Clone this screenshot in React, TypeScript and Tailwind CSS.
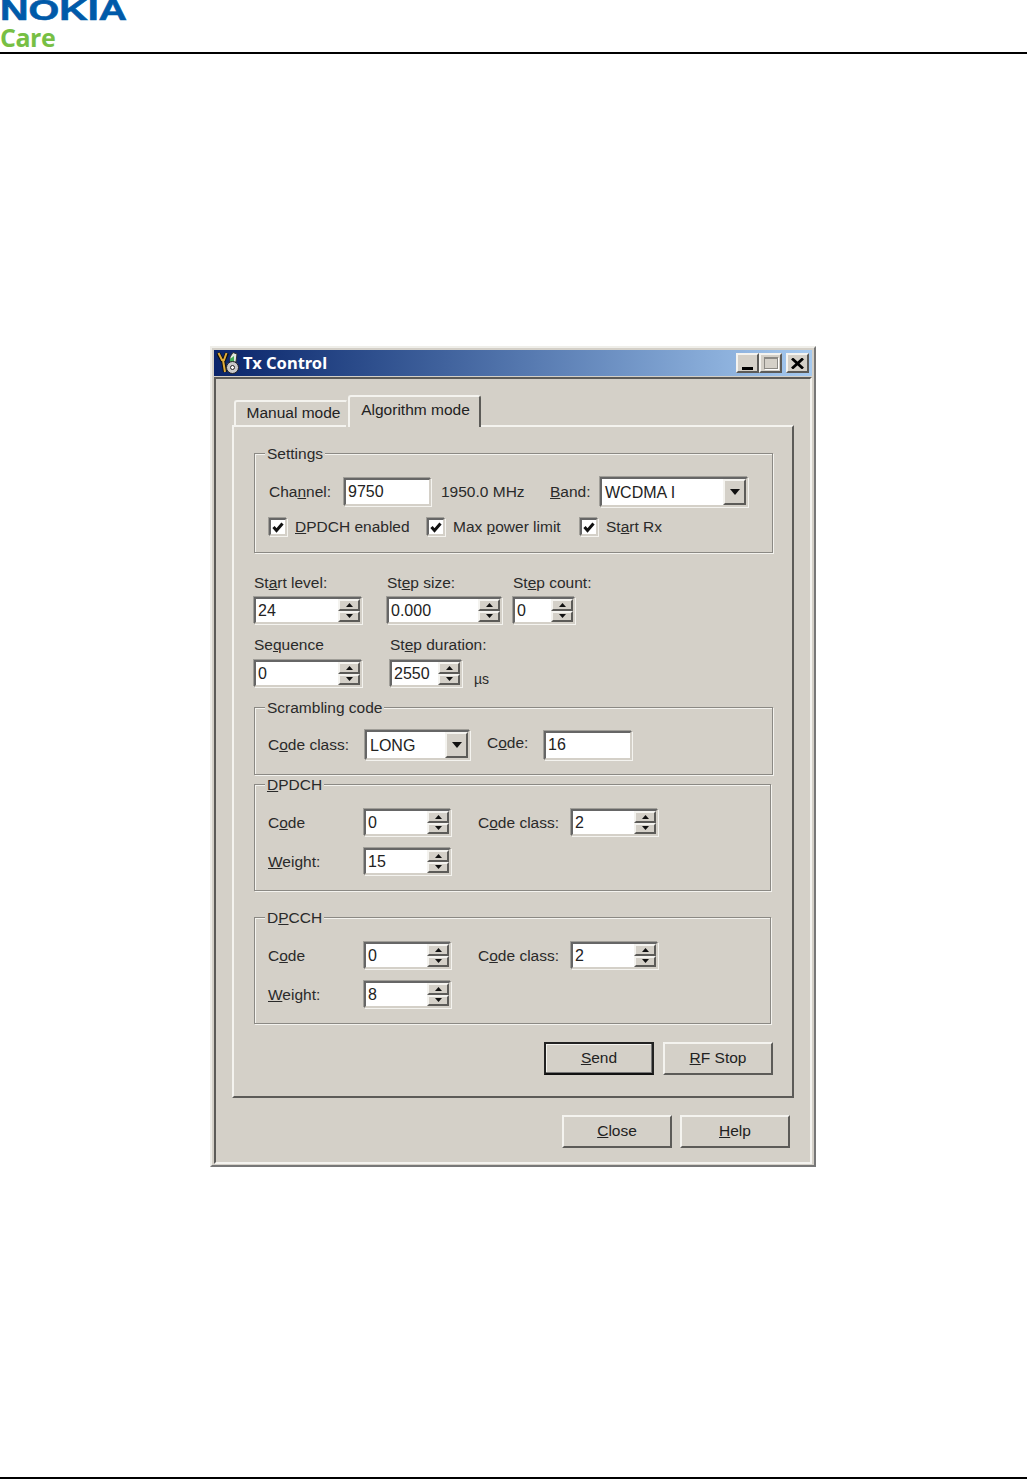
import type { ReactNode } from 'react';

const SUNKEN =
  'border-2 border-t-[#666] border-l-[#666] border-r-[#d4d0c8] border-b-[#d4d0c8] shadow-[1px_1px_0_#f4f3ef,-1px_-1px_0_#a09e98]';
const RAISED =
  'border-2 border-t-[#f4f3ef] border-l-[#f4f3ef] border-r-[#5c5b58] border-b-[#5c5b58]';

function Arrow({ up = false, big = false }: { up?: boolean; big?: boolean }) {
  const w = big ? 10 : 7;
  const h = big ? 6 : 4;
  return (
    <svg width={w} height={h} viewBox="0 0 10 6" preserveAspectRatio="none">
      <path d={up ? 'M5 0 10 6H0Z' : 'M0 0H10L5 6Z'} fill="#111" />
    </svg>
  );
}

function TextField({ value, className }: { value: string; className: string }) {
  return (
    <div className={`${SUNKEN} flex items-center bg-white pl-[2px] text-[16px] text-[#222] ${className}`}>
      {value}
    </div>
  );
}

function Spinner({ value, className }: { value: string; className: string }) {
  return (
    <div className={`${SUNKEN} flex h-[27px] items-stretch bg-white ${className}`}>
      <div className="min-w-0 flex-1 pl-[2px] text-[16px] leading-[24px] text-[#222]">{value}</div>
      <div className="flex w-[22px] flex-col bg-[#d4d0c8]">
        <div className={`${RAISED} flex flex-1 items-center justify-center`}>
          <Arrow up />
        </div>
        <div className={`${RAISED} flex flex-1 items-center justify-center`}>
          <Arrow />
        </div>
      </div>
    </div>
  );
}

function Combo({ value, className }: { value: string; className: string }) {
  return (
    <div className={`${SUNKEN} flex h-[30px] items-stretch bg-white ${className}`}>
      <div className="flex-1 pl-[3px] text-[16px] leading-[28px] text-[#222]">{value}</div>
      <div className={`${RAISED} flex w-[23px] items-center justify-center bg-[#d4d0c8]`}>
        <Arrow big />
      </div>
    </div>
  );
}

function Check({ children, className = '' }: { children: ReactNode; className?: string }) {
  return (
    <div className={`flex items-center ${className}`}>
      <div className={`${SUNKEN} flex h-[18px] w-[18px] items-center justify-center bg-white`}>
        <svg width="12" height="11" viewBox="0 0 12 11">
          <path d="M1.5 5 4.5 8.5 10.5 1.5" fill="none" stroke="#111" strokeWidth="3" />
        </svg>
      </div>
      <span className="ml-[8px]">{children}</span>
    </div>
  );
}

function Group({
  title,
  className,
  children,
}: {
  title: ReactNode;
  className: string;
  children: ReactNode;
}) {
  return (
    <div className={`relative border border-[#8b8984] shadow-[1px_1px_0_#f4f3ef,inset_1px_1px_0_#f4f3ef] ${className}`}>
      <span className="absolute -top-[9px] left-[10px] bg-[#d4d0c8] px-[2px] leading-[18px]">
        {title}
      </span>
      {children}
    </div>
  );
}

function Button({
  children,
  isDefault = false,
  className = '',
}: {
  children: ReactNode;
  isDefault?: boolean;
  className?: string;
}) {
  return (
    <div
      className={`flex h-[33px] w-[110px] items-center justify-center pb-[2px] text-[#222] ${
        isDefault ? 'border-2 border-[#222] border-b-[#111] shadow-[inset_-1px_-1px_0_#777,inset_1px_1px_0_#f4f3ef]' : RAISED
      } ${className}`}
    >
      <span>{children}</span>
    </div>
  );
}

function CodeBox({ title, weight, className }: { title: ReactNode; weight: string; className: string }) {
  return (
    <Group title={title} className={`h-[107px] w-[517px] pl-[13px] pt-[24px] ${className}`}>
      <div className="flex items-center">
        <span className="w-[96px]">
          C<u>o</u>de
        </span>
        <Spinner value="0" className="w-[87px]" />
        <span className="ml-[27px] w-[93px]">
          C<u>o</u>de class:
        </span>
        <Spinner value="2" className="w-[87px]" />
      </div>
      <div className="mt-[12px] flex items-center">
        <span className="w-[96px]">
          <u>W</u>eight:
        </span>
        <Spinner value={weight} className="w-[87px]" />
      </div>
    </Group>
  );
}

export default function App() {
  return (
    <div className="relative h-[1479px] w-[1027px] overflow-hidden bg-white font-['Liberation_Sans',sans-serif] text-[15.5px] text-[#2a2a2a]">
      {/* Header */}
      <header className="h-[54px] border-b-2 border-black">
        <div className="h-[21px] origin-left scale-x-[1.36] text-[29px] font-bold leading-[20px] text-[#005aa9] [-webkit-text-stroke:0.6px_#005aa9]">
          NOKIA
        </div>
        <div className="mt-[3px] font-['Open_Sans',sans-serif] text-[25px] font-bold leading-[26px] tracking-[-0.5px] text-[#77bf44]">
          Care
        </div>
      </header>

      {/* Dialog */}
      <main className="pl-[210px] pt-[292px]">
        <div className="h-[821px] w-[606px] border-2 border-t-[#efeee9] border-l-[#efeee9] border-r-[#777] border-b-[#777] bg-[#d4d0c8] p-[2px]">
          {/* Title bar */}
          <div className="flex h-[26px] items-center bg-gradient-to-r from-[#0a246a] to-[#a6caf0] pl-[3px] pr-[3px]">
            <svg width="23" height="24" viewBox="0 0 23 24" className="shrink-0">
              <path d="M1 2 5 9 7 9 10 2M6 9 8 21" fill="none" stroke="#111" strokeWidth="4" />
              <path d="M1.500 2 5 9 7 9 9.500 2M6 9 8 21" fill="none" stroke="#e0ac3a" strokeWidth="2" />
              <path d="M13 6 16 1.500 20 3 19 11 13 12Z" fill="#dfe8df" stroke="#333" />
              <path d="M13 8 17 5 17 11 13 12Z" fill="#3fae55" />
              <circle cx="15.500" cy="16.500" r="6" fill="#c9c9c9" stroke="#222" />
              <circle cx="15.500" cy="16.500" r="2" fill="#fff" stroke="#222" />
            </svg>
            <span className="ml-[3px] font-['Noto_Sans',sans-serif] text-[16.5px] font-bold leading-[26px] text-white">
              Tx Control
            </span>
            <div className="ml-auto flex h-[20px] items-stretch">
              <div className={`${RAISED} flex w-[23px] items-end justify-center bg-[#d4d0c8] pb-[1px]`}>
                <div className="h-[3px] w-[11px] bg-black" />
              </div>
              <div className={`${RAISED} flex w-[23px] items-center justify-center bg-[#d4d0c8]`}>
                <div className="h-[12px] w-[14px] border border-t-2 border-[#8b8984] shadow-[1px_1px_0_#fff]" />
              </div>
              <div className={`${RAISED} ml-[4px] flex w-[23px] items-center justify-center bg-[#d4d0c8]`}>
                <svg width="13" height="11" viewBox="0 0 13 11">
                  <path d="M1 .5 12 10.500M12 .5 1 10.500" stroke="#000" strokeWidth="2.800" />
                </svg>
              </div>
            </div>
          </div>

          {/* Client area */}
          <div className="mt-[1px] h-[787px] border-2 border-t-[#5c5b58] border-l-[#5c5b58] border-r-[#f4f3ef] border-b-[#f4f3ef]">
            {/* Tabs */}
            <div className="relative z-10 -mb-[2px] ml-[18px] mt-[16px] flex h-[32px] items-end">
              <div className="flex h-[27px] w-[114px] items-center justify-center rounded-t-[3px] border-2 border-b-0 border-[#f4f3ef] border-r-[#d4d0c8] pb-[3px] pl-[5px] text-[#222]">
                Manual mode
              </div>
              <div className="flex h-[32px] w-[133px] items-start justify-center rounded-t-[3px] border-2 border-b-0 border-t-[#f4f3ef] border-l-[#f4f3ef] border-r-[#5c5b58] bg-[#d4d0c8] pl-[2px] pt-[1px] text-[#222]">
                Algorithm mode
              </div>
            </div>

            {/* Tab pane */}
            <div className="ml-[16px] h-[673px] w-[562px] border-2 border-t-[#f4f3ef] border-l-[#f4f3ef] border-r-[#5c5b58] border-b-[#5c5b58] pl-[20px] pt-[26px]">
              <Group title="Settings" className="h-[100px] w-[519px] pl-[14px] pt-[23px]">
                <div className="flex h-[30px] items-center">
                  <span className="w-[75px]">
                    Cha<u>n</u>nel:
                  </span>
                  <TextField value="9750" className="h-[28px] w-[87px]" />
                  <span className="ml-[10px] w-[109px]">1950.0 MHz</span>
                  <span className="w-[50px]">
                    <u>B</u>and:
                  </span>
                  <Combo value="WCDMA I" className="w-[148px]" />
                </div>
                <div className="mt-[10px] flex h-[20px] items-center">
                  <Check className="w-[158px]">
                    <u>D</u>PDCH enabled
                  </Check>
                  <Check className="w-[153px]">
                    Max <u>p</u>ower limit
                  </Check>
                  <Check>
                    St<u>a</u>rt Rx
                  </Check>
                </div>
              </Group>

              <div className="mt-[20px] flex">
                <div className="w-[133px]">
                  <div className="leading-[20px]">
                    St<u>a</u>rt level:
                  </div>
                  <Spinner value="24" className="mt-[4px] w-[108px]" />
                </div>
                <div className="w-[126px]">
                  <div className="leading-[20px]">
                    St<u>e</u>p size:
                  </div>
                  <Spinner value="0.000" className="mt-[4px] w-[115px]" />
                </div>
                <div>
                  <div className="leading-[20px]">
                    St<u>e</u>p count:
                  </div>
                  <Spinner value="0" className="mt-[4px] w-[62px]" />
                </div>
              </div>

              <div className="mt-[11px] flex">
                <div className="w-[136px]">
                  <div className="leading-[20px]">
                    Se<u>q</u>uence
                  </div>
                  <Spinner value="0" className="mt-[5px] w-[108px]" />
                </div>
                <div>
                  <div className="leading-[20px]">
                    St<u>e</u>p duration:
                  </div>
                  <div className="mt-[5px] flex items-end">
                    <Spinner value="2550" className="w-[72px]" />
                    <span className="ml-[12px] text-[14px] leading-[16px]">µs</span>
                  </div>
                </div>
              </div>

              <Group title="Scrambling code" className="mt-[20px] h-[68px] w-[519px] pl-[13px] pt-[22px]">
                <div className="flex items-center">
                  <span className="w-[97px]">
                    C<u>o</u>de class:
                  </span>
                  <Combo value="LONG" className="w-[105px]" />
                  <span className="-mt-[4px] ml-[17px] w-[57px]">
                    C<u>o</u>de:
                  </span>
                  <TextField value="16" className="h-[29px] w-[88px] pb-[1px]" />
                </div>
              </Group>

              <CodeBox title={<><u>D</u>PDCH</>} weight="15" className="mt-[9px]" />
              <CodeBox title={<>D<u>P</u>CCH</>} weight="8" className="mt-[26px]" />

              <div className="mt-[18px] flex w-[519px] justify-end gap-[9px]">
                <Button isDefault>
                  <u>S</u>end
                </Button>
                <Button>
                  <u>R</u>F Stop
                </Button>
              </div>
            </div>

            {/* Dialog buttons */}
            <div className="ml-[346px] mt-[17px] flex gap-[8px]">
              <Button>
                <u>C</u>lose
              </Button>
              <Button>
                <u>H</u>elp
              </Button>
            </div>
          </div>
        </div>
      </main>

      {/* Footer rule */}
      <footer className="absolute bottom-0 left-0 h-[2px] w-full bg-black" />
    </div>
  );
}
